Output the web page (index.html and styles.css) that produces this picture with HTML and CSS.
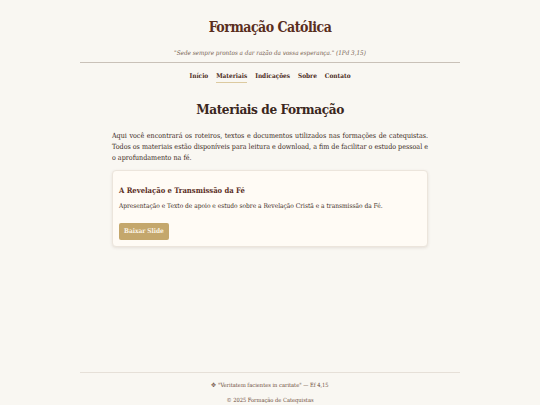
FILE: index.html
```html
<!DOCTYPE html>
<html lang="pt">
<head>
<meta charset="utf-8">
<title>Materiais de Formação</title>
<link rel="stylesheet" href="styles.css">
</head>
<body>
<div class="page">
  <header class="site-header">
    <h1 class="site-title">Formação Católica</h1>
    <p class="tagline">"Sede sempre prontos a dar razão da vossa esperança." (1Pd 3,15)</p>
    <nav class="nav">
      <a href="#">Início</a>
      <a href="#" class="active">Materiais</a>
      <a href="#">Indicações</a>
      <a href="#">Sobre</a>
      <a href="#">Contato</a>
    </nav>
  </header>
  <main class="main">
    <h2 class="page-title">Materiais de Formação</h2>
    <p class="intro">Aqui você encontrará os roteiros, textos e documentos utilizados nas formações de catequistas. Todos os materiais estão disponíveis para leitura e download, a fim de facilitar o estudo pessoal e o aprofundamento na fé.</p>
    <div class="card">
      <h3 class="card-title">A Revelação e Transmissão da Fé</h3>
      <p class="card-text">Apresentação e Texto de apoio e estudo sobre a Revelação Cristã e a transmissão da Fé.</p>
      <a href="#" class="btn">Baixar Slide</a>
    </div>
  </main>
  <footer class="footer">
    <p>✥ "Veritatem facientes in caritate" — Ef 4,15</p>
    <p>© 2025 Formação de Catequistas</p>
  </footer>
</div>
</body>
</html>
```

FILE: styles.css
```css
html, body {
  margin: 0;
  padding: 0;
  background: #f9f7f2;
}
body {
  font-family: "DejaVu Serif Condensed", "DejaVu Serif", serif;
  font-stretch: condensed;
  color: #3b2a22;
}
.page {
  width: 380px;
  margin: 0 auto;
  min-height: 405px;
  display: flex;
  flex-direction: column;
}
.site-header {
  text-align: center;
}
.site-title {
  margin: 17px 0 0;
  font-size: 14px;
  letter-spacing: -0.5px;
  line-height: 20px;
  font-weight: bold;
  color: #5a2e1e;
}
.tagline {
  margin: 11px 0 0;
  font-size: 6.3px;
  line-height: 9px;
  font-style: italic;
  color: #75604f;
  padding-bottom: 5px;
  border-bottom: 1px solid #c9c1b8;
}
.nav {
  display: flex;
  justify-content: center;
  gap: 8px;
  margin-top: 8px;
}
.nav a {
  font-size: 6.45px;
  line-height: 10px;
  font-weight: bold;
  color: #4a2a20;
  text-decoration: none;
  padding-bottom: 1px;
  border-bottom: 1.5px solid transparent;
}
.nav a.active {
  border-bottom-color: #dccaa0;
}
.main {
  width: 316px;
  margin: 0 auto;
  flex: 1;
}
.page-title {
  margin: 16px 0 0;
  text-align: center;
  font-size: 13.5px;
  letter-spacing: -0.4px;
  line-height: 20px;
  font-weight: bold;
  color: #3a2620;
}
.intro {
  margin: 11px 0 0;
  font-size: 7.1px;
  line-height: 11px;
  text-align: justify;
  color: #3b2a22;
}
.card {
  margin-top: 7px;
  background: #fffbf5;
  border: 1px solid #ece5dc;
  border-radius: 4px;
  box-shadow: 0 1px 3px rgba(90, 60, 40, 0.12);
  padding: 14px 6px 6px;
}
.card-title {
  margin: 0;
  font-size: 7.6px;
  line-height: 12px;
  font-weight: bold;
  color: #5a2e1e;
}
.card-text {
  margin: 5px 0 0;
  font-size: 6.55px;
  line-height: 9px;
  color: #3b2a22;
}
.btn {
  display: inline-block;
  margin-top: 12px;
  background: #c4a76c;
  color: #fbf3e4;
  font-size: 6.5px;
  line-height: 9px;
  font-weight: bold;
  text-decoration: none;
  padding: 4px 5px;
  border-radius: 2px;
}
.footer {
  border-top: 1px solid #e6e0d8;
  text-align: center;
  padding-top: 8px;
}
.footer p {
  margin: 0 0 6px;
  font-size: 5.7px;
  line-height: 9px;
  color: #6e5040;
}
.footer p:last-child {
  margin-bottom: 0;
}
```
